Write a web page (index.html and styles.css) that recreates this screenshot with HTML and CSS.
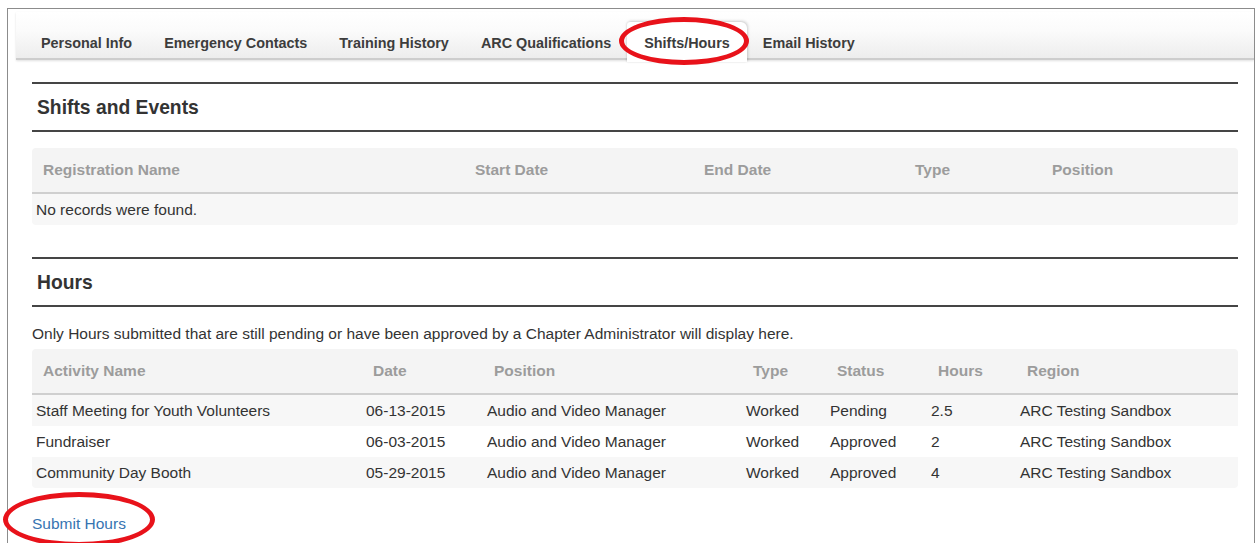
FILE: index.html
```html
<!DOCTYPE html>
<html lang="en">
<head>
<meta charset="utf-8">
<title>Volunteer Profile - Shifts/Hours</title>
<link rel="stylesheet" href="styles.css">
</head>
<body>
<div class="frame">
  <nav class="tabbar">
    <a class="tab">Personal Info</a>
    <a class="tab">Emergency Contacts</a>
    <a class="tab">Training History</a>
    <a class="tab">ARC Qualifications</a>
    <a class="tab active">Shifts/Hours</a>
    <a class="tab">Email History</a>
  </nav>

  <div class="content">
    <section class="block">
      <h2 class="block-title">Shifts and Events</h2>
      <table class="grid">
        <colgroup>
          <col class="s-name"><col class="s-start"><col class="s-end"><col class="s-type"><col>
        </colgroup>
        <thead>
          <tr><th>Registration Name</th><th>Start Date</th><th>End Date</th><th>Type</th><th>Position</th></tr>
        </thead>
        <tbody>
          <tr class="odd"><td colspan="5">No records were found.</td></tr>
        </tbody>
      </table>
    </section>

    <section class="block hours">
      <h2 class="block-title">Hours</h2>
      <p class="note">Only Hours submitted that are still pending or have been approved by a Chapter Administrator will display here.</p>
      <table class="grid">
        <colgroup>
          <col class="h-name"><col class="h-date"><col class="h-pos"><col class="h-type"><col class="h-status"><col class="h-hours"><col>
        </colgroup>
        <thead>
          <tr><th>Activity Name</th><th>Date</th><th>Position</th><th>Type</th><th>Status</th><th>Hours</th><th>Region</th></tr>
        </thead>
        <tbody>
          <tr class="odd"><td>Staff Meeting for Youth Volunteers</td><td>06-13-2015</td><td>Audio and Video Manager</td><td>Worked</td><td>Pending</td><td>2.5</td><td>ARC Testing Sandbox</td></tr>
          <tr><td>Fundraiser</td><td>06-03-2015</td><td>Audio and Video Manager</td><td>Worked</td><td>Approved</td><td>2</td><td>ARC Testing Sandbox</td></tr>
          <tr class="odd"><td>Community Day Booth</td><td>05-29-2015</td><td>Audio and Video Manager</td><td>Worked</td><td>Approved</td><td>4</td><td>ARC Testing Sandbox</td></tr>
        </tbody>
      </table>
      <a class="submit-link" href="#">Submit Hours</a>
    </section>
  </div>
</div>

<div class="mark mark-tab"></div>
<div class="mark mark-link"></div>
</body>
</html>
```

FILE: styles.css
```css
html, body {
  margin: 0;
  padding: 0;
  background: #fff;
  overflow: hidden;
}

body {
  font-family: "Liberation Sans", Arial, sans-serif;
  color: #333;
  height: 543px;
}

.frame {
  box-sizing: border-box;
  height: 535px;
  margin: 8px 2px 0 7px;
  border: 1px solid #8c8c8c;
  border-bottom: none;
  padding-top: 3px;
  padding-left: 8px;
  overflow: hidden;
}

/* tab strip */
.tabbar {
  display: flex;
  align-items: flex-end;
  height: 46px;
  padding-left: 9px;
  background: linear-gradient(to bottom, #ffffff 0%, #fbfbfb 40%, #ededed 100%);
  border-bottom: 2px solid #cdcdcd;
  box-shadow: 0 1px 2px rgba(0, 0, 0, 0.12);
}

.tab {
  display: block;
  height: 40px;
  line-height: 42px;
  margin-bottom: -4px;
  padding: 0 16px;
  font-size: 14.4px;
  font-weight: bold;
  color: #3d3d3d;
  white-space: nowrap;
}

.tab.active {
  position: relative;
  z-index: 1;
  background: #fff;
  padding: 0 17px;
  border-radius: 3px 6px 0 0;
  box-shadow: 1px -1px 3px rgba(0, 0, 0, 0.18), -1px 0 2px rgba(0, 0, 0, 0.08);
}

/* page body */
.content {
  padding: 22px 16px 0 16px;
}

.block-title {
  margin: 0;
  height: 46px;
  line-height: 47px;
  padding-left: 5px;
  border-top: 2px solid #454545;
  border-bottom: 2px solid #454545;
  font-size: 19.3px;
  font-weight: bold;
  color: #333;
}

.block .grid {
  margin-top: 16px;
}

.hours {
  margin-top: 32px;
}

.hours .grid {
  margin-top: 0;
}

.note {
  margin: 0;
  padding: 16px 0 4px;
  line-height: 22px;
  font-size: 15.5px;
  color: #333;
}

/* data tables */
.grid {
  width: 100%;
  table-layout: fixed;
  border-collapse: separate;
  border-spacing: 0;
  font-size: 15.5px;
  border-radius: 4px;
  overflow: hidden;
}

.grid th {
  height: 44px;
  padding: 0 0 0 11px;
  text-align: left;
  font-weight: bold;
  color: #9c9c9c;
  background: #f4f4f4;
  border-bottom: 2px solid #cfcfcf;
  white-space: nowrap;
}

.grid td {
  height: 31px;
  padding: 0 0 0 4px;
  color: #333;
  white-space: nowrap;
  background: #fff;
}

.grid tr.odd td {
  background: #f7f7f7;
}

.s-name { width: 432px; }
.s-start { width: 229px; }
.s-end { width: 211px; }
.s-type { width: 137px; }

.h-name { width: 330px; }
.h-date { width: 121px; }
.h-pos { width: 259px; }
.h-type { width: 84px; }
.h-status { width: 101px; }
.h-hours { width: 89px; }

.submit-link {
  display: inline-block;
  margin-top: 26px;
  line-height: 20px;
  font-size: 15.5px;
  color: #3674b1;
  text-decoration: none;
}

/* red highlight rings drawn over the page */
.mark {
  position: absolute;
  z-index: 5;
  box-sizing: border-box;
  border: 5px solid #e8121a;
  border-radius: 50%;
  pointer-events: none;
}

.mark-tab {
  left: 619px;
  top: 17px;
  width: 130px;
  height: 48px;
}

.mark-link {
  left: 3px;
  top: 492px;
  width: 152px;
  height: 55px;
}
```
